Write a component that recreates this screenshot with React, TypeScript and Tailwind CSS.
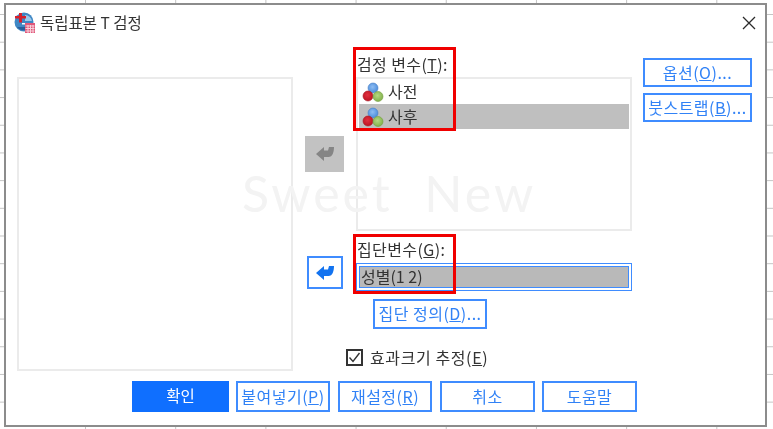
import React from "react";

const font = "font-['Noto_Sans_CJK_KR','Noto_Sans',sans-serif]";

function DialogIcon() {
  return (
    <svg width="21" height="21" viewBox="0 0 21 21" className="shrink-0">
      <circle cx="10" cy="10" r="9.5" fill="#3f87c4" />
      <path d="M3 15 A9 9 0 0 0 17 15 Z" fill="#2a5f9c" />
      <path d="M11 3 A8 8 0 0 1 18 9 L11 9 Z" fill="#9cc8ea" />
      <path d="M5 1 h3 v3 h4 v2.6 h-4 v4 h-3 v-4 h-4 v-2.6 h4 Z" fill="#d5202c" />
      <path d="M8 11 h5 v1.5 h-5 Z" fill="#ffffff" />
      <rect x="11" y="11" width="10" height="10" fill="#e0577a" />
      <path d="M11.5 14 h9 M11.5 16.5 h9 M11.5 19 h9 M14 13 v8 M16.5 13 v8 M19 13 v8" stroke="#f7d3dc" strokeWidth="1" />
    </svg>
  );
}

function Balls({ id }: { id: string }) {
  return (
    <svg width="22" height="20" viewBox="0 0 22 20" className="shrink-0">
      <defs>
        <radialGradient id={id + "b"} cx="0.45" cy="0.4" r="0.7">
          <stop offset="0" stopColor="#8fbdf2" />
          <stop offset="1" stopColor="#3f84d8" />
        </radialGradient>
        <radialGradient id={id + "r"} cx="0.45" cy="0.4" r="0.7">
          <stop offset="0" stopColor="#e2303e" />
          <stop offset="1" stopColor="#b5101e" />
        </radialGradient>
        <radialGradient id={id + "g"} cx="0.45" cy="0.4" r="0.7">
          <stop offset="0" stopColor="#b4d880" />
          <stop offset="1" stopColor="#79aa42" />
        </radialGradient>
      </defs>
      <circle cx="11" cy="6" r="5" fill={`url(#${id}b)`} stroke="#4a80c4" strokeWidth="0.6" />
      <circle cx="6" cy="14" r="5" fill={`url(#${id}r)`} stroke="#a81824" strokeWidth="0.6" />
      <circle cx="16" cy="14.5" r="5" fill={`url(#${id}g)`} stroke="#74a040" strokeWidth="0.6" />
    </svg>
  );
}

function TurnArrow({ color }: { color: string }) {
  return (
    <svg width="18" height="14" viewBox="0 0 18 14">
      <path d="M0 7 L8 0 V3.5 H12 L13 0 H18 C18 5 16.5 10 12.5 10 H8 V14 Z" fill={color} />
    </svg>
  );
}

function Btn({ className, children }: { className: string; children: React.ReactNode }) {
  return (
    <button className={`flex items-center justify-center border-2 border-[#3f8cff] bg-white pb-[2px] text-[16px] leading-none tracking-[0.5px] text-[#3182f6] ${className}`}>
      {children}
    </button>
  );
}

export default function App() {
  return (
    <div className={`relative h-[429px] w-[773px] overflow-hidden bg-white bg-[linear-gradient(to_right,#c4c4c4_1px,transparent_1px),linear-gradient(to_bottom,#c4c4c4_1px,transparent_1px)] bg-[size:90.2px_27.7px] bg-[position:85px_14px] pl-[4px] pt-[3px] blur-[0.4px] ${font}`}>
      <div className="flex h-[424px] w-[763px] flex-col border-2 border-[#8c8c8c] bg-white">
        {/* title bar */}
        <div className="flex h-[33px] shrink-0 items-center pl-[8px] pr-[9px] pt-[2px]">
          <DialogIcon />
          <span className="ml-[5px] text-[15.5px] leading-none text-[#333333]">독립표본 T 검정</span>
          <svg width="14" height="14" viewBox="0 0 14 14" className="ml-auto">
            <path d="M1 1 L13 13 M13 1 L1 13" stroke="#2b2b2b" strokeWidth="1.3" />
          </svg>
        </div>

        {/* main */}
        <div className="flex h-[343px] shrink-0 items-start pl-[11px]">
          <div className="mt-[39px] h-[294px] w-[276px] border-2 border-[#ebebeb]" />

          <div className="ml-[12px] flex w-[39px] flex-col">
            <div className="mt-[98px] flex h-[36px] w-[39px] items-center justify-center bg-[#c2c2c2]">
              <TurnArrow color="#858585" />
            </div>
            <button className="ml-[2px] mt-[84px] flex h-[33px] w-[36px] items-center justify-center border-2 border-[#3f8cff] bg-white">
              <TurnArrow color="#1273f0" />
            </button>
          </div>

          <div className="ml-[12px] flex w-[276px] flex-col">
            <div className="mt-[14px] flex h-[25px] items-center pb-[2px] pl-[1px] text-[16px] leading-none tracking-[0.4px] text-[#333333]">
              검정 변수(<u>T</u>):
            </div>
            <div className="flex h-[154px] flex-col border-2 border-[#ebebeb] px-[1px]">
              <div className="flex h-[25px] items-center gap-[4px] pl-[3px] text-[16px] text-[#333333]">
                <Balls id="a" />
                <span className="-mt-[2px]">사전</span>
              </div>
              <div className="flex h-[25px] items-center gap-[4px] bg-[#bfbfbf] pl-[3px] text-[16px] text-[#333333]">
                <Balls id="c" />
                <span className="-mt-[2px]">사후</span>
              </div>
            </div>
            <div className="flex h-[32px] items-center pl-[1px] pt-[3px] text-[16px] leading-none tracking-[0.4px] text-[#333333]">
              집단변수(<u>G</u>):
            </div>
            <div className="h-[28px] border border-[#3f8cff] p-[2px]">
              <div className="flex h-full items-center border border-[#3f8cff] bg-[#b9b9b9] pb-[2px] pl-[1px] text-[16px] leading-none text-[#333333]">
                성별(1 2)
              </div>
            </div>
            <Btn className="ml-[17px] mt-[8px] h-[30px] w-[114px]">
              집단 정의(<u>D</u>)...
            </Btn>
            <div className="-ml-[10px] mt-[20px] flex h-[17px] items-center gap-[7px] text-[16px] leading-none tracking-[0.6px] text-[#333333]">
              <span className="flex h-[17px] w-[17px] items-center justify-center border-2 border-[#333333]">
                <svg width="13" height="13" viewBox="0 0 13 13">
                  <path d="M1.5 6.5 L5 10.5 L11.5 2" fill="none" stroke="#333333" strokeWidth="1.4" />
                </svg>
              </span>
              <span className="-mt-[2px]">
                효과크기 추정(<u>E</u>)
              </span>
            </div>
          </div>

          <div className="ml-[11px] flex w-[109px] flex-col gap-[6px] pt-[20px]">
            <Btn className="h-[29px] w-[109px]">
              옵션(<u>O</u>)...
            </Btn>
            <Btn className="h-[29px] w-[109px]">
              붓스트랩(<u>B</u>)...
            </Btn>
          </div>
        </div>

        {/* bottom buttons */}
        <div className="flex pl-[126px]">
          <button className="flex h-[31px] w-[97px] items-center justify-center bg-[#0f6fff] pb-[2px] text-[15.5px] leading-none text-white">
            확인
          </button>
          <Btn className="ml-[7px] h-[31px] w-[94px]">
            붙여넣기(<u>P</u>)
          </Btn>
          <Btn className="ml-[8px] h-[31px] w-[94px]">
            재설정(<u>R</u>)
          </Btn>
          <Btn className="ml-[8px] h-[31px] w-[95px]">취소</Btn>
          <Btn className="ml-[7px] h-[31px] w-[95px]">도움말</Btn>
        </div>
      </div>

      {/* watermark */}
      <span className="pointer-events-none absolute left-[242px] top-[168px] font-['Lato',sans-serif] text-[50px] font-normal leading-none tracking-[3px] whitespace-pre text-[#f3f3f3]">
        Sweet  New
      </span>

      {/* red highlight boxes */}
      <div className="pointer-events-none absolute left-[353px] top-[47px] h-[84px] w-[103px] border-[3px] border-[#f00000]" />
      <div className="pointer-events-none absolute left-[353px] top-[234px] h-[60px] w-[103px] border-[3px] border-[#f00000]" />
    </div>
  );
}
